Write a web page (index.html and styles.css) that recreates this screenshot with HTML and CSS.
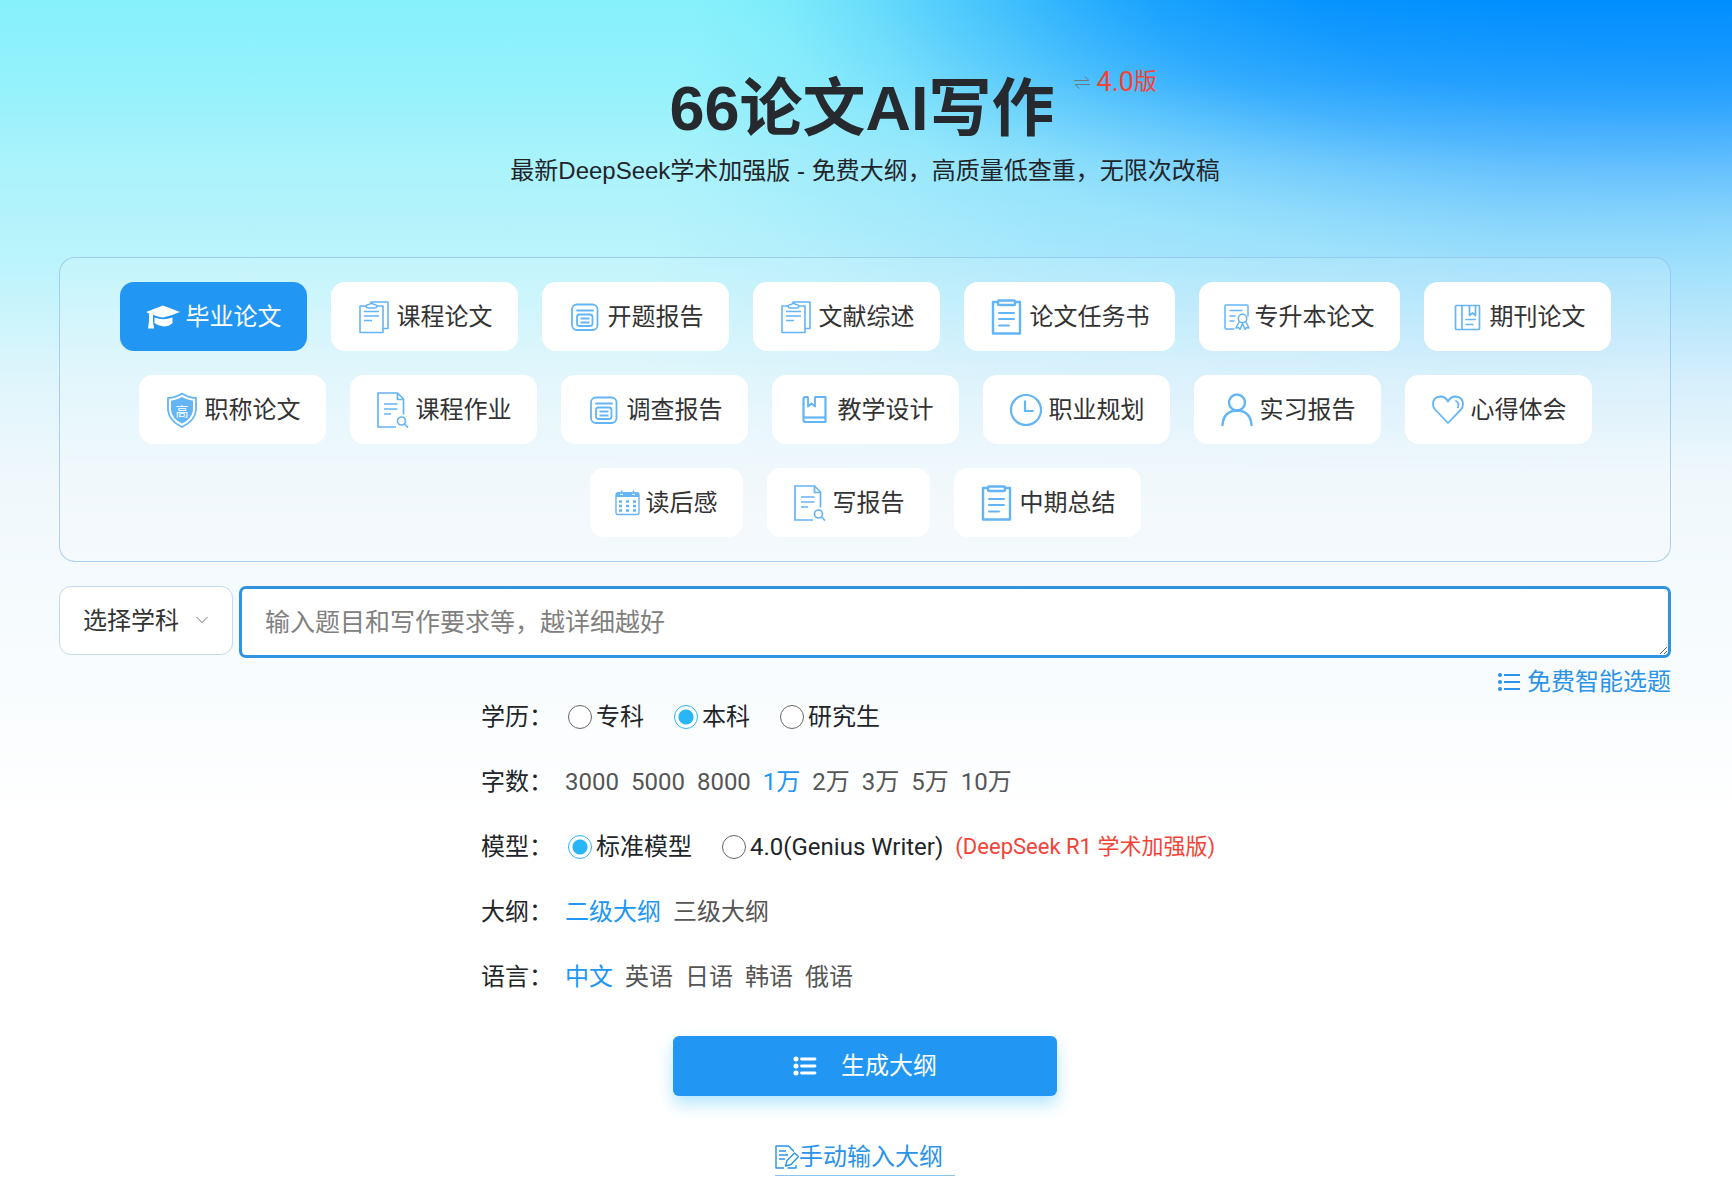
FILE: index.html
```
<!DOCTYPE html>
<html lang="zh-CN">
<head>
  <meta charset="utf-8">
  <meta name="viewport" content="width=device-width, initial-scale=1">
  <title>66论文AI写作</title>
  <link rel="stylesheet" href="styles.css">
</head>
<body>
  <!-- shared icons -->
  <svg class="sprite" aria-hidden="true">
    <symbol id="i-cap" viewBox="0 0 36 36">
      <path fill="currentColor" d="M18 6.500 35 13 Q26 17 18 18.500 Q11 17.500 8 15.500 V22 L9 29.500 H3 L4 22 V14.500 L1 13Z"/>
      <path fill="currentColor" d="M9.500 18.500 Q18 22 27.500 18.500 V24 Q24 27.500 18.500 27.500 Q13 27 9.500 24Z"/>
    </symbol>
    <symbol id="i-papers" viewBox="0 0 36 36">
      <g fill="none" stroke="currentColor" stroke-width="1.600" stroke-linejoin="round">
        <path d="M10.500 7 H4 V33.500 H27 V7 H20.500"/>
        <path d="M10 7.500 Q10.500 5.500 13 5.500 Q15.500 3.500 18 5.500 Q20.500 5.500 21 7.500 Q20.500 9 18.500 9 H12.500 Q10.500 9 10 7.500Z"/>
        <path d="M15 4.500 V3 H32 V29.500 H27"/>
        <path d="M8 12.500 H23 M8 17 H23 M8 21.500 H16"/>
      </g>
    </symbol>
    <symbol id="i-report" viewBox="0 0 36 36">
      <g fill="none" stroke="currentColor" stroke-width="1.800">
        <rect x="5" y="5.500" width="25.500" height="25.500" rx="5"/>
        <path d="M10 11.500 H26" stroke-linecap="round"/>
        <rect x="10" y="15.500" width="15.500" height="11.500" rx="2.500"/>
        <path d="M13.500 19.500 H22.500 M13.500 23.500 H22.500"/>
      </g>
    </symbol>
    <symbol id="i-clipboard" viewBox="0 0 36 36">
      <g fill="none" stroke="currentColor" stroke-width="2.400" stroke-linejoin="round" stroke-linecap="round">
        <path d="M9 3 H4 V34.500 H31 V3 H26.500"/>
        <rect x="9" y="1.500" width="17" height="4.500" rx="1"/>
        <path d="M10 14 H25 M10 20 H25 M10 26.500 H20" stroke-width="2"/>
      </g>
    </symbol>
    <symbol id="i-diploma" viewBox="0 0 26 26">
      <g fill="none" stroke="currentColor" stroke-width="1.500" stroke-linejoin="round" stroke-linecap="round">
        <path d="M10 25 H2 Q1 25 1 24 V2 Q1 1 2 1 H23 Q24 1 24 2 V12"/>
        <path d="M6 6.500 H18 M6 12 H11 M6 17 H10"/>
        <circle cx="18.500" cy="14.500" r="4.200"/>
        <path d="M15 18 L12 24 L14.500 23.500 L16 25.500 L18.500 19.500 L21 25.500 L22.500 23.500 L25 24 L22 18"/>
      </g>
    </symbol>
    <symbol id="i-journal" viewBox="0 0 36 36">
      <g fill="none" stroke="currentColor" stroke-width="1.700" stroke-linejoin="round">
        <rect x="6.500" y="6.500" width="24" height="24" rx="1"/>
        <path d="M13 6.500 V30.500"/>
        <path d="M20.500 7 V16.500 L23.500 14 L26.500 16.500 V7"/>
        <path d="M16.500 20.500 H27 M16.500 25.500 H24.500"/>
      </g>
    </symbol>
    <symbol id="i-shield" viewBox="0 0 36 36">
      <path fill="none" stroke="currentColor" stroke-width="1.800" stroke-linejoin="round" d="M18 1.500 Q24 5.500 32 6 V18 Q31 29 18 35 Q5 29 4 18 V6 Q12 5.500 18 1.500Z"/>
      <path fill="currentColor" d="M18 5 Q22.500 8 29 8.700 V18 Q28 27 18 31.500 Q8 27 7 18 V8.700 Q13.500 8 18 5Z"/>
      <text class="shield-text" x="18" y="24" text-anchor="middle">高</text>
    </symbol>
    <symbol id="i-search-doc" viewBox="0 0 36 36">
      <g fill="none" stroke="currentColor" stroke-width="1.700">
        <path d="M21 35 H3 V1 H22.500 L28.500 7 V22.500"/>
        <path d="M22.500 1 V7.500 H28.500"/>
        <path d="M9 12 H22.500 M9 17 H22.500 M9 22 H16"/>
        <circle cx="26.500" cy="29" r="4"/>
        <path d="M29.500 32 L33 35.500"/>
      </g>
    </symbol>
    <symbol id="i-book" viewBox="0 0 36 36">
      <g fill="none" stroke="currentColor" stroke-width="2.200" stroke-linejoin="round">
        <path d="M11 5 H8.500 Q6.500 5 6.500 7 V28 Q6.500 30 8.500 30 H28.500 V5 H18"/>
        <path d="M6.500 25.500 H28.500"/>
        <path stroke-width="1.900" d="M11 4.500 V14.500 L14.500 11.500 L18 14.500 V4.500"/>
      </g>
    </symbol>
    <symbol id="i-clock" viewBox="0 0 36 36">
      <g fill="none" stroke="currentColor" stroke-width="2.200">
        <circle cx="18" cy="18" r="15"/>
        <path d="M17 8.500 V19 H25.500"/>
      </g>
    </symbol>
    <symbol id="i-user" viewBox="0 0 36 36">
      <g fill="none" stroke="currentColor" stroke-width="2.400" stroke-linecap="round">
        <circle cx="18" cy="10.500" r="8"/>
        <path d="M3.500 33 Q4.500 19 18 18.500 Q31.500 19 32.500 33"/>
      </g>
    </symbol>
    <symbol id="i-heart" viewBox="0 0 36 36">
      <g fill="none" stroke="currentColor" stroke-width="1.800" stroke-linejoin="round" stroke-linecap="round">
        <path d="M18 31 L5.500 18 Q3 15.500 3 12.500 Q3 5 10.500 4.500 Q15.500 4.500 18 9.500 Q20.500 4.500 25.500 4.500 Q33 5 33 12.500 Q33 15.500 30.500 18Z"/>
        <path d="M26 9 Q29.500 10.500 28 15.500"/>
      </g>
    </symbol>
    <symbol id="i-calendar" viewBox="0 0 26 26">
      <rect x="1" y="3" width="23" height="21.500" rx="2" fill="none" stroke="currentColor" stroke-width="1.400"/>
      <path fill="currentColor" d="M1 7 V4 Q1 2 3 2 H5 V5 H8 V2 H17 V5 H20 V2 H22 Q24 2 24 4 V7Z"/>
      <path stroke="currentColor" stroke-width="1.600" d="M6.500 0.500 V4 M18.500 0.500 V4"/>
      <path stroke="currentColor" stroke-width="2.600" stroke-dasharray="3 4" d="M4 11.500 H21 M4 16 H21 M4 20.500 H21"/>
    </symbol>
    <symbol id="i-list" viewBox="0 0 24 24">
      <g fill="currentColor">
        <circle cx="3" cy="5" r="2"/><circle cx="3" cy="12" r="2"/><circle cx="3" cy="19" r="2"/>
        <path d="M7 4 H23 V6 H7Z M7 11 H23 V13 H7Z M7 18 H23 V20 H7Z"/>
      </g>
    </symbol>
    <symbol id="i-list-bold" viewBox="0 0 24 24">
      <g fill="none" stroke="currentColor" stroke-linecap="round">
        <path stroke-width="5" d="M3 5 H3.010 M3 12 H3.010 M3 19 H3.010"/>
        <path stroke-width="2.800" d="M8.500 5 H22 M8.500 12 H22 M8.500 19 H22"/>
      </g>
    </symbol>
    <symbol id="i-edit" viewBox="0 0 24 24">
      <g fill="none" stroke="currentColor" stroke-width="1.400" stroke-linejoin="round">
        <path d="M9 23 H1 V1 H13.500 L19 6.500"/>
        <path d="M4 6 H11 M4 10 H13 M4 14 H10"/>
        <path d="M10.500 21 L12 15.500 L19.500 8 L23.500 11.500 L16 19.500Z"/>
        <path d="M12.500 23 H21 V20"/>
      </g>
    </symbol>
  </svg>

  <main class="page">
    <header class="hero">
      <h1 class="title">66论文AI写作
        <a class="version" href="#">
          <svg class="swap" viewBox="0 0 16 16" aria-hidden="true"><path d="M0 6.500 H15 L10.500 2.500 M16 10.500 H1 L5.500 14.500"/></svg>
          <span class="version-num">4.0</span><span class="version-text">版</span>
        </a>
      </h1>
      <p class="subtitle">最新DeepSeek学术加强版 - 免费大纲，高质量低查重，无限次改稿</p>
    </header>

    <nav class="types">
      <button type="button" class="type active"><svg class="icon"><use href="#i-cap"/></svg>毕业论文</button>
      <button type="button" class="type"><svg class="icon"><use href="#i-papers"/></svg>课程论文</button>
      <button type="button" class="type"><svg class="icon"><use href="#i-report"/></svg>开题报告</button>
      <button type="button" class="type"><svg class="icon"><use href="#i-papers"/></svg>文献综述</button>
      <button type="button" class="type"><svg class="icon"><use href="#i-clipboard"/></svg>论文任务书</button>
      <button type="button" class="type"><svg class="icon small"><use href="#i-diploma"/></svg>专升本论文</button>
      <button type="button" class="type"><svg class="icon"><use href="#i-journal"/></svg>期刊论文</button>
      <button type="button" class="type"><svg class="icon"><use href="#i-shield"/></svg>职称论文</button>
      <button type="button" class="type"><svg class="icon"><use href="#i-search-doc"/></svg>课程作业</button>
      <button type="button" class="type"><svg class="icon"><use href="#i-report"/></svg>调查报告</button>
      <button type="button" class="type"><svg class="icon"><use href="#i-book"/></svg>教学设计</button>
      <button type="button" class="type"><svg class="icon"><use href="#i-clock"/></svg>职业规划</button>
      <button type="button" class="type"><svg class="icon"><use href="#i-user"/></svg>实习报告</button>
      <button type="button" class="type"><svg class="icon"><use href="#i-heart"/></svg>心得体会</button>
      <button type="button" class="type"><svg class="icon small"><use href="#i-calendar"/></svg>读后感</button>
      <button type="button" class="type"><svg class="icon"><use href="#i-search-doc"/></svg>写报告</button>
      <button type="button" class="type"><svg class="icon"><use href="#i-clipboard"/></svg>中期总结</button>
    </nav>

    <form id="outlineForm">
      <div class="search">
        <div class="subject">
          <select name="subject" aria-label="选择学科">
            <option>选择学科</option>
          </select>
          <svg class="chevron" viewBox="0 0 12 8" aria-hidden="true"><path d="M0.500 1 L6 6.500 L11.500 1"/></svg>
        </div>
        <textarea name="topic" rows="1" aria-label="题目" placeholder="输入题目和写作要求等，越详细越好"></textarea>
      </div>

      <div class="pick">
        <a href="#"><svg class="icon-text"><use href="#i-list"/></svg>免费智能选题</a>
      </div>

      <div class="options">
        <div class="row" role="group" aria-labelledby="l-degree">
          <span class="label" id="l-degree">学历：</span>
          <div class="radios">
            <label><input type="radio" name="degree">专科</label>
            <label><input type="radio" name="degree" checked>本科</label>
            <label><input type="radio" name="degree">研究生</label>
          </div>
        </div>
        <div class="row" role="group" aria-labelledby="l-words">
          <span class="label" id="l-words">字数：</span>
          <div class="choices">
            <button type="button">3000</button>
            <button type="button">5000</button>
            <button type="button">8000</button>
            <button type="button" class="on">1万</button>
            <button type="button">2万</button>
            <button type="button">3万</button>
            <button type="button">5万</button>
            <button type="button">10万</button>
          </div>
        </div>
        <div class="row" role="group" aria-labelledby="l-model">
          <span class="label" id="l-model">模型：</span>
          <div class="radios">
            <label><input type="radio" name="model" checked>标准模型</label>
            <label><input type="radio" name="model">4.0(Genius Writer)<span class="note">(DeepSeek R1 学术加强版)</span></label>
          </div>
        </div>
        <div class="row" role="group" aria-labelledby="l-outline">
          <span class="label" id="l-outline">大纲：</span>
          <div class="choices">
            <button type="button" class="on">二级大纲</button>
            <button type="button">三级大纲</button>
          </div>
        </div>
        <div class="row" role="group" aria-labelledby="l-lang">
          <span class="label" id="l-lang">语言：</span>
          <div class="choices">
            <button type="button" class="on">中文</button>
            <button type="button">英语</button>
            <button type="button">日语</button>
            <button type="button">韩语</button>
            <button type="button">俄语</button>
          </div>
        </div>
      </div>

      <div class="actions">
        <button type="submit" class="submit"><svg class="icon-text"><use href="#i-list-bold"/></svg>生成大纲</button>
        <a class="manual" href="#"><svg class="icon-text"><use href="#i-edit"/></svg>手动输入大纲</a>
      </div>
    </form>
  </main>
</body>
</html>
```
FILE: styles.css
```
* {
  box-sizing: border-box;
}

body {
  margin: 0;
  min-height: 100vh;
  font-family: Roboto, "Noto Sans CJK SC", sans-serif;
  font-size: 24px;
  line-height: 36px;
  color: #212529;
  background-color: #fff;
  background-image:
    linear-gradient(to bottom, rgba(255, 255, 255, 0) 480px, #fff 820px),
    linear-gradient(to bottom, rgba(240, 246, 252, 0) 0, rgba(240, 246, 252, 0.12) 80px, rgba(240, 246, 252, 0.34) 165px, rgba(240, 246, 252, 0.5) 260px, rgba(240, 246, 252, 0.84) 380px, #f0f8fc 480px),
    radial-gradient(ellipse 52% 270px at 97% 0, #008fff 0, #008fff 18%, rgba(0, 143, 255, 0.92) 40%, rgba(0, 143, 255, 0.72) 58%, rgba(0, 143, 255, 0.35) 76%, rgba(0, 143, 255, 0.1) 90%, rgba(0, 143, 255, 0) 100%),
    linear-gradient(100deg, #86f1fb 0, #86f1fb 36%, #5fd8fb 56%, #46c6fb 80%, #4fccfb 100%);
  background-repeat: no-repeat;
}

button,
select,
textarea {
  font: inherit;
  color: inherit;
}

button {
  border: none;
  cursor: pointer;
}

a {
  color: #2b93e8;
  text-decoration: none;
}

.sprite {
  display: none;
}

.page {
  padding: 70px 61px 12px 59px;
}

/* header */
.hero {
  text-align: center;
  margin-bottom: 68px;
}

.title {
  display: inline-block;
  position: relative;
  margin: 0;
  padding-right: 6px;
  font-family: "Liberation Sans", "Noto Sans CJK SC", sans-serif;
  font-size: 63px;
  line-height: 76px;
  color: #262a2e;
}

.version {
  position: absolute;
  top: -6px;
  left: 100%;
  display: flex;
  align-items: center;
  margin-left: 13px;
  font-family: Roboto, "Noto Sans CJK SC", sans-serif;
  font-weight: 400;
  line-height: 36px;
  color: #f44336;
}

.swap {
  width: 16px;
  height: 16px;
  margin-right: 7px;
  fill: none;
  stroke: #6c7a80;
}

.version-num {
  font-size: 27px;
}

.version-text {
  font-size: 23px;
}

.subtitle {
  margin: 7px 0 0;
  font-family: "Liberation Sans", "Noto Sans CJK SC", sans-serif;
}

/* paper types */
.types {
  display: flex;
  flex-wrap: wrap;
  justify-content: center;
  gap: 24px;
  padding: 24px;
  border: 1px solid rgba(144, 190, 232, 0.7);
  border-radius: 16px;
  background: rgba(255, 255, 255, 0.12);
}

.type {
  display: flex;
  align-items: center;
  gap: 5px;
  height: 69px;
  padding: 0 25px;
  border-radius: 14px;
  background: #fff;
  color: #333;
}

.type.active {
  background: #2196f3;
  color: #fff;
}

.icon {
  width: 36px;
  height: 36px;
  color: #64b5f6;
}

.icon.small {
  width: 26px;
  height: 26px;
}

.active .icon {
  color: #fff;
}

.shield-text {
  font-size: 13px;
  fill: #fff;
}

.icon-text {
  width: 24px;
  height: 24px;
}

/* subject and topic */
.search {
  display: flex;
  align-items: flex-start;
  gap: 6px;
  margin-top: 24px;
}

.subject {
  position: relative;
  flex: none;
}

.subject select {
  appearance: none;
  width: 174px;
  height: 69px;
  padding: 0 23px;
  border: 1px solid #c5d9ec;
  border-radius: 12px;
  background: #fff;
  color: #333;
}

.chevron {
  position: absolute;
  right: 25px;
  top: 30px;
  width: 12px;
  height: 8px;
  fill: none;
  stroke: #777;
  pointer-events: none;
}

.search textarea {
  flex: 1;
  height: 72px;
  padding: 16px 23px 10px;
  border: 3px solid #2f93e0;
  border-radius: 7px;
  outline: none;
  background: #fff;
  font-size: 25px;
  resize: vertical;
}

.search textarea::placeholder {
  color: #808080;
}

.pick {
  display: flex;
  justify-content: flex-end;
  margin-top: 6px;
}

.pick a {
  display: flex;
  align-items: center;
  gap: 6px;
}

/* options */
.options {
  width: 768px;
  max-width: 100%;
  margin: -16px auto 0;
}

.row {
  display: flex;
  height: 65px;
  align-items: center;
}

.label {
  width: 84px;
}

.choices {
  display: flex;
  gap: 12px;
}

.choices button {
  padding: 0;
  background: none;
  color: #555;
}

.choices .on {
  color: #2196f3;
}

.radios {
  display: flex;
  gap: 27px;
}

.radios label {
  display: flex;
  align-items: center;
}

.radios input {
  appearance: none;
  width: 24px;
  height: 24px;
  margin: 0 4px 0 3px;
  border: 1px solid #666;
  border-radius: 50%;
  background: #fff;
}

.radios input:checked {
  border-color: #29b6f6;
  background: radial-gradient(circle, #29b6f6 0 7px, #fff 8px);
}

.note {
  margin-left: 12px;
  font-size: 22px;
  color: #f44336;
}

/* actions */
.actions {
  display: flex;
  flex-direction: column;
  align-items: center;
  gap: 43px;
  margin-top: 27px;
}

.submit {
  display: flex;
  align-items: center;
  justify-content: center;
  gap: 24px;
  width: 384px;
  height: 60px;
  border-radius: 6px;
  background: #2196f3;
  box-shadow: 0 8px 16px rgba(41, 182, 246, 0.35);
  color: #fff;
}

.manual {
  display: flex;
  align-items: center;
  padding-right: 12px;
  border-bottom: 1px solid #8cc6ee;
}
```
